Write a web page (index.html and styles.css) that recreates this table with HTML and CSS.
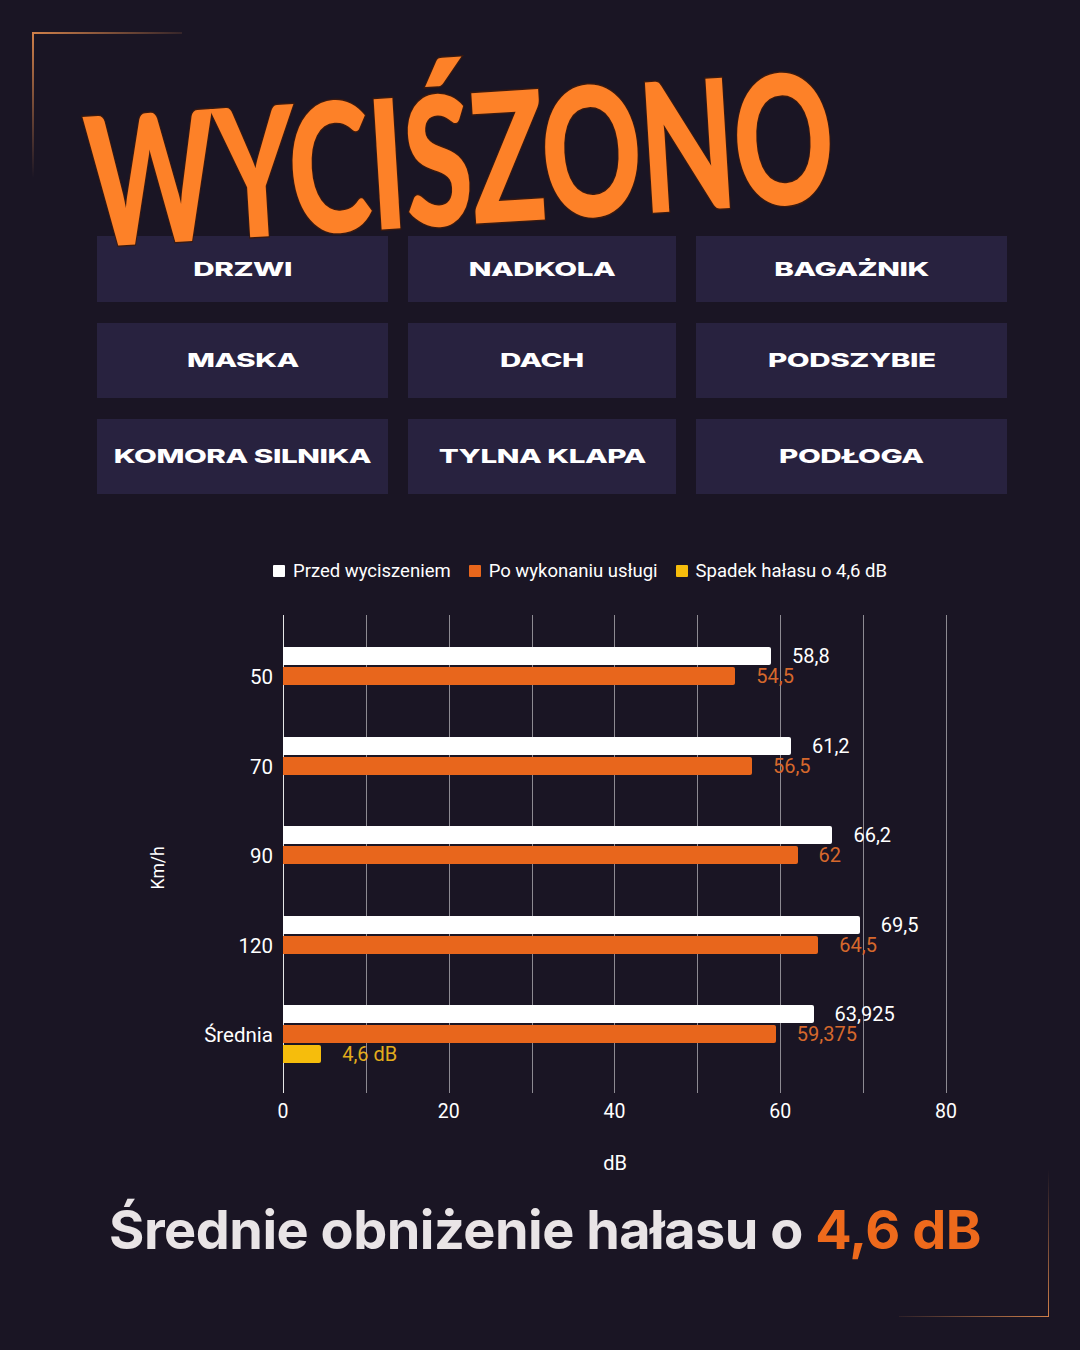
FILE: index.html
```html
<!DOCTYPE html>
<html lang="pl">
<head>
<meta charset="utf-8">
<title>Wyciszono</title>
<link rel="stylesheet" href="styles.css">
</head>
<body>
<div class="page">
  <div class="corner corner-tl"></div>
  <div class="corner corner-br"></div>

  <h1 class="title"><span class="title-text">WYCIŚZONO</span></h1>

  <div class="tiles">
    <div class="tile"><span>DRZWI</span></div>
    <div class="tile"><span>NADKOLA</span></div>
    <div class="tile"><span>BAGAŻNIK</span></div>
    <div class="tile"><span>MASKA</span></div>
    <div class="tile"><span>DACH</span></div>
    <div class="tile"><span>PODSZYBIE</span></div>
    <div class="tile"><span>KOMORA SILNIKA</span></div>
    <div class="tile"><span>TYLNA KLAPA</span></div>
    <div class="tile"><span>PODŁOGA</span></div>
  </div>

  <div class="chart">
    <div class="legend">
      <div class="legend-item"><i class="swatch white"></i><span>Przed wyciszeniem</span></div>
      <div class="legend-item"><i class="swatch orange"></i><span>Po wykonaniu usługi</span></div>
      <div class="legend-item"><i class="swatch yellow"></i><span>Spadek hałasu o 4,6 dB</span></div>
    </div>

    <div class="chart-body">
      <div class="ylabel">Km/h</div>
      <div class="rows">
        <div class="group">
          <div class="cat">50</div>
          <div class="bars">
            <div class="bar-row"><div class="bar white" style="width:73.5%"></div><span class="val v-white">58,8</span></div>
            <div class="bar-row"><div class="bar orange" style="width:68.125%"></div><span class="val v-orange">54,5</span></div>
            <div class="bar-row"></div>
          </div>
        </div>
        <div class="group">
          <div class="cat">70</div>
          <div class="bars">
            <div class="bar-row"><div class="bar white" style="width:76.5%"></div><span class="val v-white">61,2</span></div>
            <div class="bar-row"><div class="bar orange" style="width:70.625%"></div><span class="val v-orange">56,5</span></div>
            <div class="bar-row"></div>
          </div>
        </div>
        <div class="group">
          <div class="cat">90</div>
          <div class="bars">
            <div class="bar-row"><div class="bar white" style="width:82.75%"></div><span class="val v-white">66,2</span></div>
            <div class="bar-row"><div class="bar orange" style="width:77.5%"></div><span class="val v-orange">62</span></div>
            <div class="bar-row"></div>
          </div>
        </div>
        <div class="group">
          <div class="cat">120</div>
          <div class="bars">
            <div class="bar-row"><div class="bar white" style="width:86.875%"></div><span class="val v-white">69,5</span></div>
            <div class="bar-row"><div class="bar orange" style="width:80.625%"></div><span class="val v-orange">64,5</span></div>
            <div class="bar-row"></div>
          </div>
        </div>
        <div class="group">
          <div class="cat">Średnia</div>
          <div class="bars">
            <div class="bar-row"><div class="bar white" style="width:79.906%"></div><span class="val v-white">63,925</span></div>
            <div class="bar-row"><div class="bar orange" style="width:74.219%"></div><span class="val v-orange">59,375</span></div>
            <div class="bar-row"><div class="bar yellow" style="width:5.75%"></div><span class="val v-yellow">4,6 dB</span></div>
          </div>
        </div>
      </div>
    </div>

    <div class="xticks">
      <span><i>0</i></span>
      <span><i>20</i></span>
      <span><i>40</i></span>
      <span><i>60</i></span>
      <span><i>80</i></span>
    </div>
    <div class="xlabel">dB</div>
  </div>

  <p class="summary">Średnie obniżenie hałasu o <span class="accent">4,6 dB</span></p>
</div>
</body>
</html>
```

FILE: styles.css
```css
html, body {
  margin: 0;
  padding: 0;
}

body {
  background: #1a1524;
  width: 1080px;
  height: 1350px;
  overflow: hidden;
  font-family: "Roboto", "Liberation Sans", sans-serif;
  color: #ffffff;
}

.page {
  position: relative;
  width: 1080px;
  height: 1350px;
}

/* decorative corner frames */
.corner {
  position: absolute;
  width: 150px;
  height: 146px;
}
.corner::before,
.corner::after {
  content: "";
  position: absolute;
}
.corner-tl {
  left: 32px;
  top: 32px;
}
.corner-tl::before {
  left: 0;
  top: 0;
  width: 150px;
  height: 1.5px;
  background: linear-gradient(90deg, #d0804a, rgba(208, 128, 74, 0.15));
}
.corner-tl::after {
  left: 0;
  top: 0;
  width: 1.5px;
  height: 146px;
  background: linear-gradient(180deg, #d0804a, rgba(208, 128, 74, 0));
}
.corner-br {
  right: 31px;
  bottom: 33px;
}
.corner-br::before {
  right: 0;
  bottom: 0;
  width: 150px;
  height: 1.5px;
  background: linear-gradient(270deg, #d0804a, rgba(208, 128, 74, 0.1));
}
.corner-br::after {
  right: 0;
  bottom: 0;
  width: 1.5px;
  height: 148px;
  background: linear-gradient(0deg, #d0804a, rgba(208, 128, 74, 0));
}

/* title */
.title {
  position: relative;
  z-index: 2;
  margin: 0;
  height: 236px;
  box-sizing: border-box;
  padding: 88px 0 0 80px;
  font-family: "Lato", "DejaVu Sans", sans-serif;
  font-weight: 900;
  font-size: 124px;
  line-height: 1;
  color: #fd8128;
  letter-spacing: -2px;
}
.title-text {
  display: inline-block;
  transform-origin: left top;
  transform: rotate(-3.5deg) scaleY(1.45);
  -webkit-text-stroke: 2px #3a1a10;
  paint-order: stroke fill;
}

/* tiles */
.tiles {
  display: grid;
  grid-template-columns: 291px 268px 311px;
  grid-template-rows: 66px 75px 75px;
  gap: 21px 20px;
  margin-left: 97px;
}
.tile {
  background: #28223f;
  display: flex;
  align-items: center;
  justify-content: center;
  font-family: "Inter", "Liberation Sans", sans-serif;
  font-weight: 800;
  font-size: 19px;
  color: #ffffff;
  letter-spacing: -0.3px;
}
.tile span {
  display: inline-block;
  transform: scaleX(1.56);
}

/* chart */
.chart {
  font-family: "Roboto", "Liberation Sans", sans-serif;
  font-size: 19.5px;
}
.legend {
  display: flex;
  align-items: center;
  gap: 18px;
  margin: 67px 0 0 273px;
  height: 20px;
  font-size: 18.5px;
  color: #ffffff;
}
.legend-item {
  display: flex;
  align-items: center;
  gap: 8px;
}
.swatch {
  display: block;
  width: 12px;
  height: 12px;
  border-radius: 1px;
}
.swatch.white { background: #ffffff; }
.swatch.orange { background: #e8661c; }
.swatch.yellow { background: #f6bd0c; }

.chart-body {
  display: flex;
  margin-top: 34px;
}
.ylabel {
  width: 20px;
  margin-left: 148px;
  writing-mode: vertical-rl;
  transform: rotate(180deg);
  display: flex;
  align-items: center;
  justify-content: center;
  padding-bottom: 28px;
  box-sizing: border-box;
  line-height: 20px;
  font-size: 17.5px;
}
.rows {
  width: 779px;
  box-sizing: border-box;
  padding: 32px 0 28px;
  display: flex;
  flex-direction: column;
  gap: 29.6px;
  background:
    linear-gradient(#e6e6e6, #e6e6e6) no-repeat 115px 0 / 1px 100%,
    repeating-linear-gradient(90deg, rgba(255, 255, 255, 0.5) 0 1px, transparent 1px 82.875px) no-repeat 115px 0 / 664px 100%;
}
.group {
  display: grid;
  grid-template-columns: 115px 664px;
  height: 60px;
}
.cat {
  align-self: center;
  text-align: right;
  padding-right: 10px;
  line-height: 20px;
  font-size: 20.5px;
}
.bars {
  display: flex;
  flex-direction: column;
}
.bar-row {
  height: 20px;
  display: flex;
  align-items: flex-start;
}
.bar {
  height: 18px;
  border-radius: 0 2px 2px 0;
}
.bar.white { background: #ffffff; }
.bar.orange { background: #e8661c; }
.bar.yellow { background: #f6bd0c; }
.val {
  margin-left: 21px;
  line-height: 18px;
  font-size: 20px;
  white-space: nowrap;
}
.v-white { color: #ffffff; }
.v-orange { color: #d6682c; }
.v-yellow { color: #e2ac1c; }

.xticks {
  display: flex;
  margin: 9px 0 0 283px;
  height: 20px;
  line-height: 20px;
}
.xticks span {
  width: 165.75px;
  flex: none;
}
.xticks i {
  display: inline-block;
  font-style: normal;
  transform: translateX(-50%);
}
.xlabel {
  margin: 31px 0 0 283px;
  width: 664px;
  text-align: center;
  line-height: 20px;
  font-size: 20px;
}

/* summary */
.summary {
  margin: 27px 0 0;
  padding-left: 10px;
  text-align: center;
  font-family: "Inter", "Liberation Sans", sans-serif;
  font-weight: 700;
  font-size: 54px;
  line-height: 60px;
  color: #e9e4e6;
  letter-spacing: -0.5px;
}
.summary .accent {
  color: #ee6a1c;
}
```
